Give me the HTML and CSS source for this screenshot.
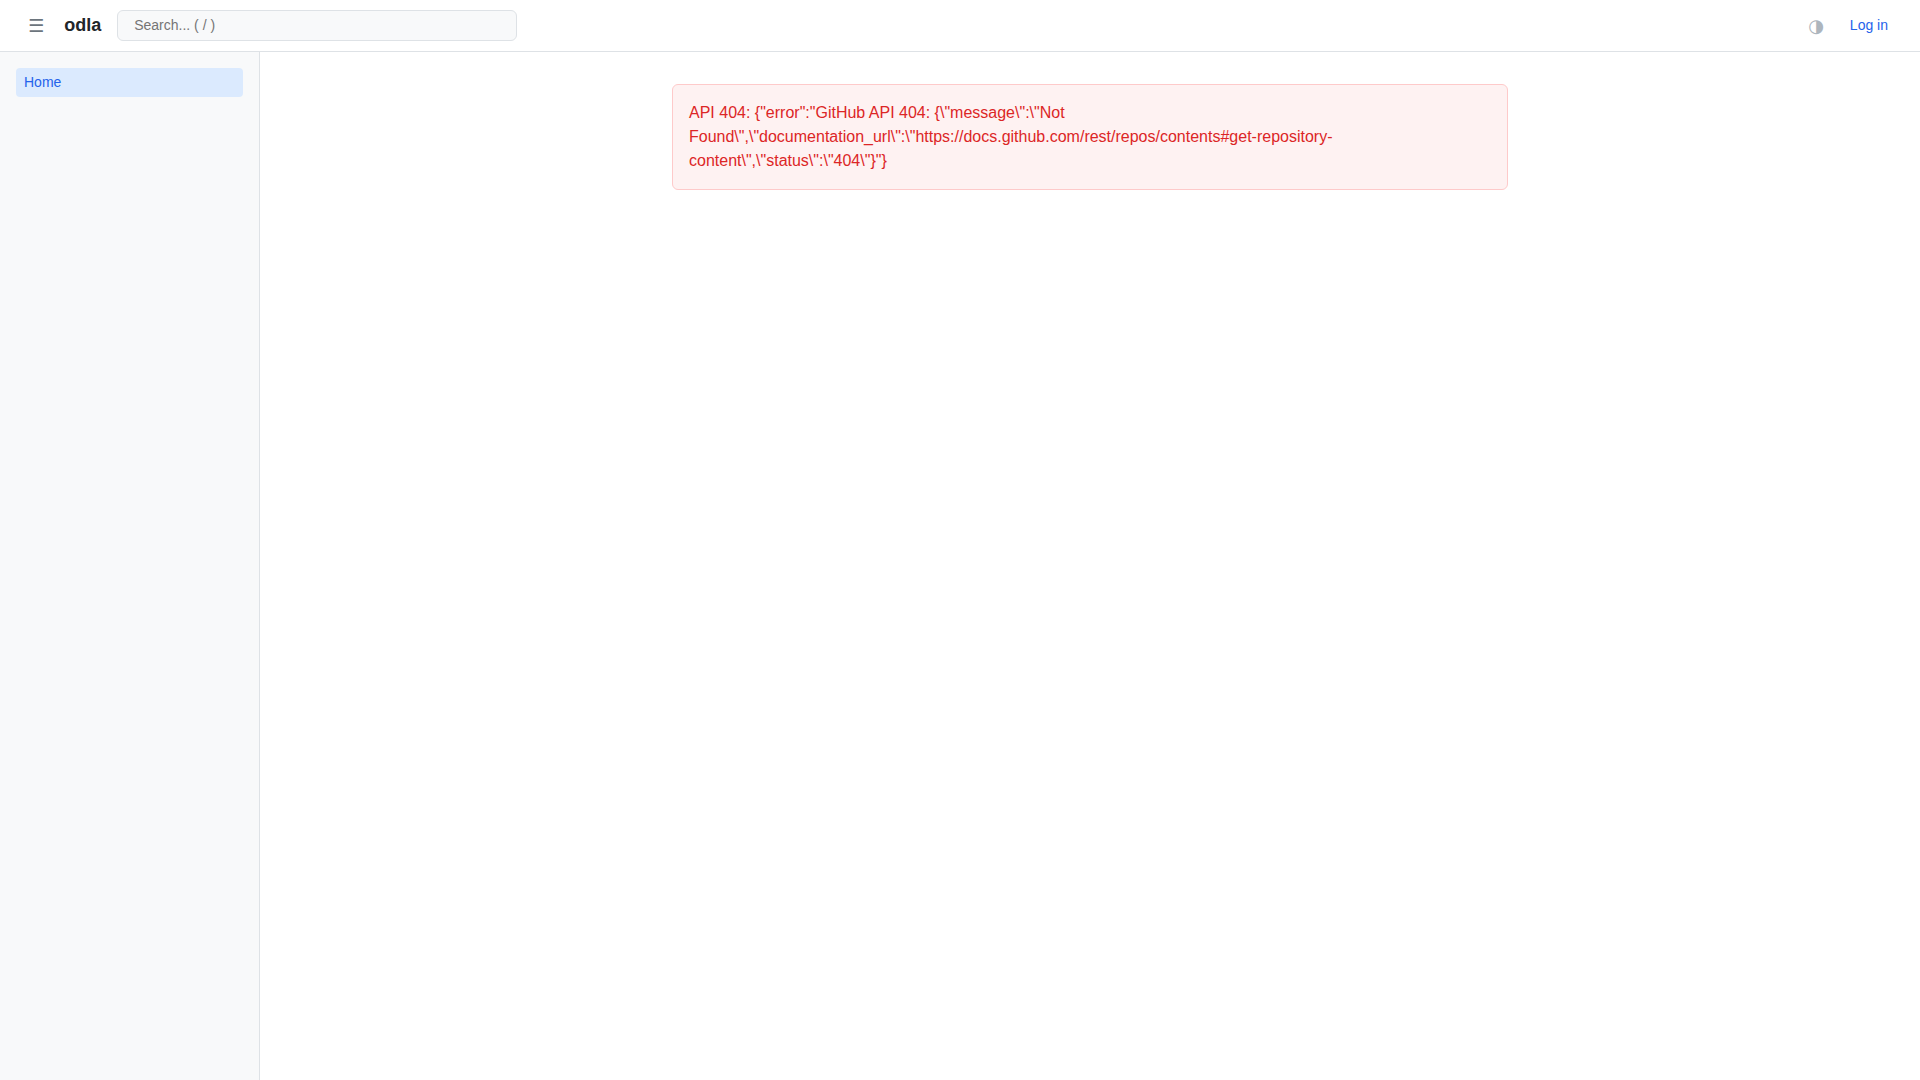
FILE: index.html
```html
<!DOCTYPE html>
<html lang="en">
<head>
<meta charset="utf-8">
<meta name="viewport" content="width=device-width, initial-scale=1">
<title>odla</title>
<link rel="stylesheet" href="styles.css">
</head>
<body>
<header class="topbar">
  <button class="icon-button" type="button" aria-label="Toggle sidebar">☰</button>
  <a class="brand" href="#">odla</a>
  <input class="search" type="search" placeholder="Search... ( / )" aria-label="Search">
  <div class="actions">
    <button class="icon-button theme-toggle" type="button" aria-label="Toggle theme">◑</button>
    <a class="login" href="#">Log in</a>
  </div>
</header>
<div class="layout">
  <nav class="sidebar" aria-label="Pages">
    <a class="nav-link active" href="#">Home</a>
  </nav>
  <main class="content">
    <div class="error" role="alert">API 404: {"error":"GitHub API 404: {\"message\":\"Not Found\",\"documentation_url\":\"https://docs.github.com/rest/repos/contents#get-repository-content\",\"status\":\"404\"}"}</div>
  </main>
</div>
</body>
</html>
```
FILE: styles.css
```css
* {
  box-sizing: border-box;
}

body {
  display: flex;
  flex-direction: column;
  min-height: 100vh;
  margin: 0;
  background: #fff;
  color: #212529;
  font-family: "Liberation Sans", Arial, sans-serif;
  font-size: 16px;
  line-height: 24px;
}

a {
  color: #2563eb;
  text-decoration: none;
}

.topbar {
  display: flex;
  align-items: center;
  gap: 16px;
  padding: 10px 24px;
  border-bottom: 1px solid #dee2e6;
  line-height: 21px;
}

.icon-button {
  padding: 0 4px;
  border: 0;
  background: none;
  color: #6c757d;
  font-family: "DejaVu Sans", sans-serif;
  font-size: 18px;
  line-height: 21px;
  cursor: pointer;
}

.theme-toggle {
  color: #adb5bd;
}

.brand {
  color: #212529;
  font-size: 18px;
  font-weight: 700;
}

.search {
  width: 400px;
  padding: 4px 16px;
  border: 1px solid #dee2e6;
  border-radius: 6px;
  background: #f8f9fa;
  color: #212529;
  font: inherit;
  font-size: 14px;
}

.actions {
  display: flex;
  align-items: center;
  gap: 14px;
  margin-left: auto;
}

.login {
  padding: 0 8px;
  font-size: 14px;
}

.layout {
  display: flex;
  flex: 1;
}

.sidebar {
  flex: 0 0 260px;
  padding: 16px;
  border-right: 1px solid #dee2e6;
  background: #f8f9fa;
}

.nav-link {
  display: block;
  padding: 4px 8px;
  border-radius: 4px;
  font-size: 14px;
  line-height: 21px;
}

.nav-link.active {
  background: #dbeafe;
}

.content {
  flex: 1;
  min-width: 0;
  padding: 32px;
}

.error {
  max-width: 836px;
  margin: 0 auto;
  padding: 16px;
  border: 1px solid #fecaca;
  border-radius: 6px;
  background: #fef2f2;
  color: #dc2626;
}
```
